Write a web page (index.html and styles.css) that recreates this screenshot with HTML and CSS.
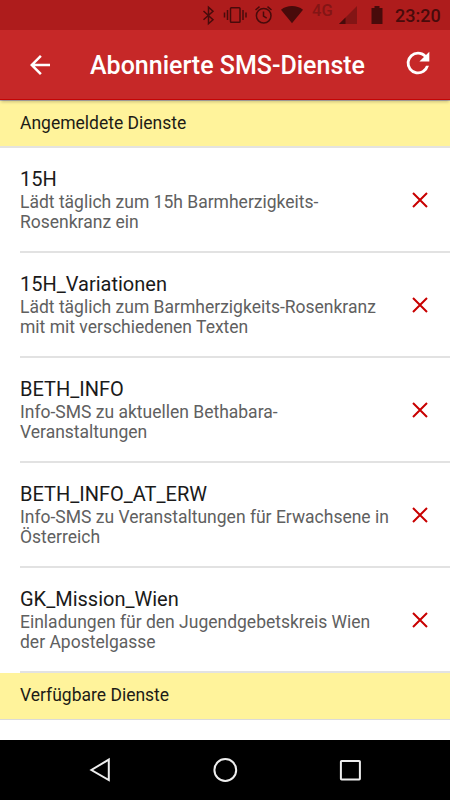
FILE: index.html
```html
<!DOCTYPE html>
<html lang="de">
<head>
<meta charset="utf-8">
<title>Abonnierte SMS-Dienste</title>
<link rel="stylesheet" href="styles.css">
</head>
<body>
<div class="screen">
  <div class="status">
    <svg class="status-icons" width="110" height="30" viewBox="200 0 110 30">
      <path d="M203.500 11l9.500 8.700-4.500 4V7.200l4.500 4-9.500 8.500" fill="none" stroke="#480b0b" stroke-width="1.500"/>
      <g fill="none" stroke="#480b0b" stroke-width="1.500"><rect x="230.500" y="7.700" width="9.500" height="14.500" rx=".8"/><path d="M227.500 10v10M224.500 12.500v5M243 10v10M246 12.500v5"/></g>
      <g fill="none" stroke="#480b0b" stroke-width="1.500"><circle cx="263.700" cy="15.700" r="7.300"/><path d="M263.500 11.500v4.700l3.200 2M255.500 10l4-3.300M271.500 10l-4-3.300"/></g>
      <path d="M281 9.700C287 4.700 297 4.700 303 9.700L292 23.300z" fill="#480b0b"/>
    </svg>
    <span class="network">4G</span>
    <svg class="signal" width="18" height="18" viewBox="0 0 18 18"><path d="M18 0v18H0z" fill="#831515"/><path d="M6.500 11.500V18H0z" fill="#480b0b"/></svg>
    <svg class="battery" width="12" height="18" viewBox="0 0 12 18"><path d="M.5 2H3.500V0h5v2h3v16H.5z" fill="#480b0b"/></svg>
    <span class="clock">23:20</span>
  </div>
  <header class="toolbar">
    <svg class="back" width="30" height="30" viewBox="0 0 24 24"><path d="M20 11H7.830l5.590-5.590L12 4l-8 8 8 8 1.410-1.410L7.830 13H20z"/></svg>
    <h1>Abonnierte SMS-Dienste</h1>
    <svg class="refresh" width="34" height="34" viewBox="0 0 24 24"><path d="M17.650 6.350A7.960 7.960 0 0 0 12 4a8 8 0 1 0 7.730 10h-2.080A6 6 0 1 1 12 6c1.660 0 3.140.69 4.220 1.780L13 11h7V4z"/></svg>
  </header>
  <main class="content">
    <h2>Angemeldete Dienste</h2>
    <ul>
      <li><div class="info"><h3>15H</h3><p>Lädt täglich zum 15h Barmherzigkeits-<br>Rosenkranz ein</p></div><svg class="remove" viewBox="0 0 16 16"><path d="M1 1l14 14M15 1L1 15"/></svg></li>
      <li><div class="info"><h3>15H_Variationen</h3><p>Lädt täglich zum Barmherzigkeits-Rosenkranz<br>mit mit verschiedenen Texten</p></div><svg class="remove" viewBox="0 0 16 16"><path d="M1 1l14 14M15 1L1 15"/></svg></li>
      <li><div class="info"><h3>BETH_INFO</h3><p>Info-SMS zu aktuellen Bethabara-<br>Veranstaltungen</p></div><svg class="remove" viewBox="0 0 16 16"><path d="M1 1l14 14M15 1L1 15"/></svg></li>
      <li><div class="info"><h3>BETH_INFO_AT_ERW</h3><p>Info-SMS zu Veranstaltungen für Erwachsene in<br>Österreich</p></div><svg class="remove" viewBox="0 0 16 16"><path d="M1 1l14 14M15 1L1 15"/></svg></li>
      <li><div class="info"><h3>GK_Mission_Wien</h3><p>Einladungen für den Jugendgebetskreis Wien<br>der Apostelgasse</p></div><svg class="remove" viewBox="0 0 16 16"><path d="M1 1l14 14M15 1L1 15"/></svg></li>
    </ul>
    <h2 class="available">Verfügbare Dienste</h2>
  </main>
  <nav class="navbar">
    <svg width="25" height="26" viewBox="0 0 25 26"><path d="M20.800 2.600v20.500L3.400 13z"/></svg>
    <svg width="25" height="26" viewBox="0 0 25 26"><circle cx="12.300" cy="13" r="10.900"/></svg>
    <svg width="25" height="26" viewBox="0 0 25 26"><rect x="2.900" y="3.900" width="19" height="18.500" rx=".7"/></svg>
  </nav>
</div>
</body>
</html>
```
FILE: styles.css
```css
* { box-sizing: border-box; }
body, h1, h2, h3, p, ul { margin: 0; padding: 0; }
body { font-family: Roboto, "Liberation Sans", sans-serif; background: #fff; }
svg { display: block; flex: none; }
.screen { width: 450px; height: 800px; display: flex; flex-direction: column; overflow: hidden; }

.status { height: 30px; flex: none; display: flex; align-items: center; padding-left: 200px; background: #ae1c1c; }
.network { width: 21px; margin: -8px 0 0 2px; font-size: 16.5px; line-height: 20px; font-weight: 500; color: #831515; }
.signal { margin-left: 6px; }
.battery { margin-left: 14px; }
.clock { margin-left: 12px; font-size: 18px; font-weight: 500; color: #480b0b; }

.toolbar { height: 70px; flex: none; display: flex; align-items: center; padding-left: 25px; background: #c62828; border-bottom: 1px solid #c40505; box-shadow: 0 3px 3px -1px rgba(0, 0, 0, .2), 0 1px #bdb7b0; z-index: 1; }
.toolbar svg { fill: #fff; }
.toolbar h1 { width: 275px; margin: 2px 0 0 35px; font-size: 25px; line-height: 30px; font-weight: 500; color: #fff; white-space: nowrap; }
.toolbar .refresh { margin: -3px 0 0 36px; }

.content { flex: 1; min-height: 0; overflow: hidden; }
h2 { height: 48px; padding: 0 20px; border-bottom: 2px solid #e4e3e0; background: #fff39b; font-size: 17.5px; line-height: 46px; font-weight: 400; color: #1c1c16; }
h2.available { height: 47px; border-bottom: 1px solid #dadada; line-height: 45px; }
ul { list-style: none; }
li { height: 105px; display: flex; align-items: center; margin-left: 20px; padding-right: 22px; border-bottom: 2px solid #e2e2e2; }
.info { flex: 1; min-width: 0; white-space: nowrap; }
h3 { font-size: 20px; line-height: 25px; font-weight: 400; color: #1a1a1a; }
p { font-size: 17.5px; line-height: 20px; color: #606060; }
.remove { width: 16px; height: 16px; fill: none; stroke: #c80000; stroke-width: 2; }

.navbar { height: 60px; flex: none; display: flex; align-items: center; justify-content: center; gap: 100px; background: #000; }
.navbar svg { fill: none; stroke: #eee; stroke-width: 2; }
```
